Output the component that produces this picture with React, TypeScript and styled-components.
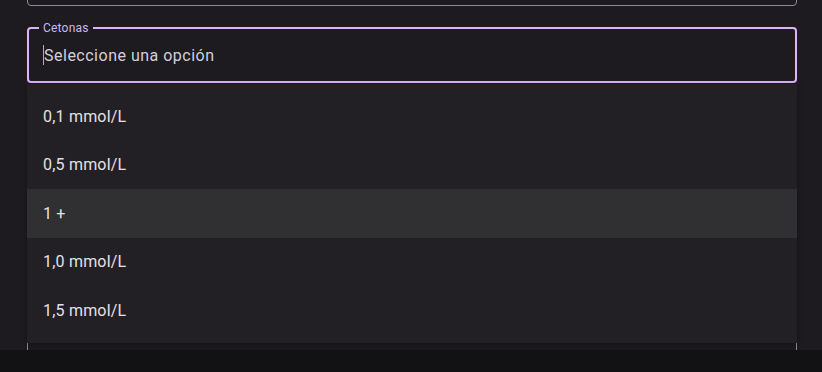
import React from "react";
import styled, { createGlobalStyle } from "styled-components";

const Global = createGlobalStyle`
  html, body { margin: 0; padding: 0; background: #1d1b20; }
  body { font-family: Roboto, "Noto Sans", "Liberation Sans", sans-serif; }
  * { box-sizing: border-box; }
`;

const Page = styled.div`
  width: 822px;
  height: 372px;
  display: flex;
  flex-direction: column;
  overflow: hidden;
  background: #1d1b20;
`;

const Content = styled.div`
  position: relative;
  flex: 1;
  overflow: hidden;
  padding: 0 25px 0 27px;
  display: flex;
  flex-direction: column;
  gap: 21px;
`;

const Field = styled.div<{ $focused?: boolean; $first?: boolean }>`
  position: relative;
  flex: 0 0 56px;
  height: 56px;
  border-radius: 4px;
  border: ${(p) => (p.$focused ? "2px solid #dcb2fa" : "1px solid #8f8a93")};
  display: flex;
  align-items: center;
  padding-left: ${(p) => (p.$focused ? "14px" : "15px")};
  margin-top: ${(p) => (p.$first ? "-50px" : "0")};
`;

const Label = styled.span`
  position: absolute;
  left: 10px;
  top: -9px;
  padding: 0 4px;
  background: #1d1b20;
  color: #d8b0f7;
  font-size: 12px;
  line-height: 16px;
  letter-spacing: 0.2px;
`;

const Caret = styled.span`
  display: inline-block;
  width: 1px;
  height: 20px;
  background: #c99ae8;
`;

const Placeholder = styled.span`
  color: #d4cfd7;
  font-size: 16px;
  letter-spacing: 0.5px;
`;

const Menu = styled.ul`
  position: absolute;
  left: 27px;
  right: 25px;
  top: 84px;
  margin: 0;
  padding: 8px 0;
  list-style: none;
  background: #222024;
  box-shadow: 0 2px 6px rgba(0, 0, 0, 0.35);
`;

const Item = styled.li<{ $active?: boolean }>`
  height: 48.5px;
  display: flex;
  align-items: center;
  padding-left: 16px;
  font-size: 16px;
  color: #e4e0e6;
  letter-spacing: 0.2px;
  background: ${(p) => (p.$active ? "#302f32" : "transparent")};
`;

const BottomBar = styled.div`
  flex: 0 0 22px;
  background: #121214;
`;

const options = ["0,1 mmol/L", "0,5 mmol/L", "1 +", "1,0 mmol/L", "1,5 mmol/L"];

export default function App() {
  return (
    <Page>
      <Global />
      <Content>
        <Field $first />
        <Field $focused>
          <Label>Cetonas</Label>
          <Caret />
          <Placeholder>Seleccione una opción</Placeholder>
        </Field>
        <Field />
        <Field />
        <Field />
        <Field />
        <Menu>
          {options.map((o, i) => (
            <Item key={o} $active={i === 2}>
              {o}
            </Item>
          ))}
        </Menu>
      </Content>
      <BottomBar />
    </Page>
  );
}
